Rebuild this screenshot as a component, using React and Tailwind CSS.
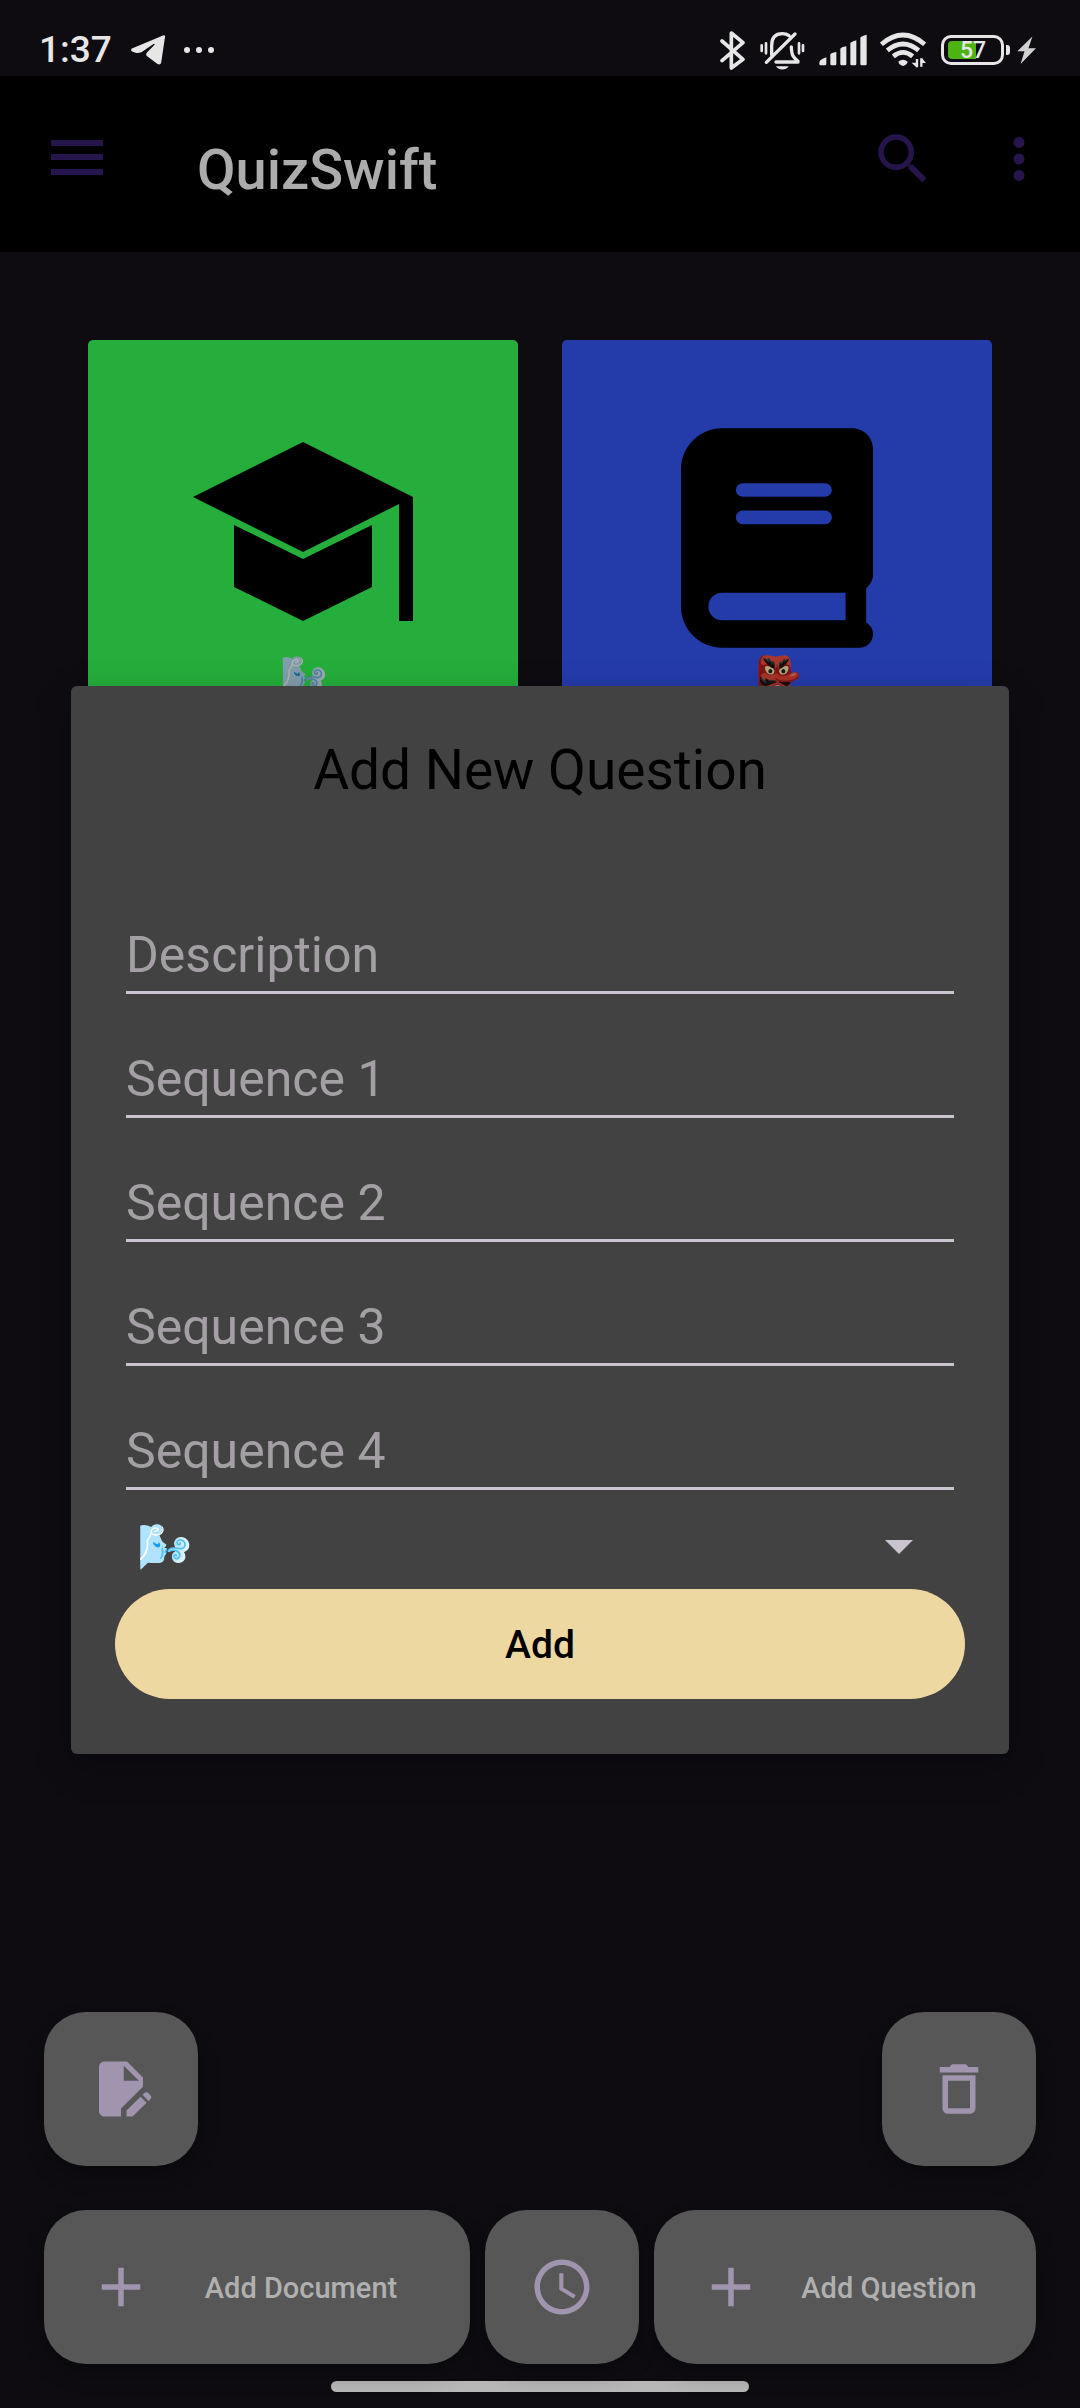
import { MdSearch, MdMoreVert, MdDeleteOutline, MdAccessTime, MdAdd } from "react-icons/md";

function StatusBar() {
  return (
    <div className="flex h-[76px] items-center justify-between pl-[39px] pr-11 pt-6 text-[#e6e6e6]">
      <div className="flex items-center">
        <span className="text-[37px] leading-[44px] font-medium">1:37</span>
        <svg className="ml-[19px] h-[30px] w-[34px]" viewBox="0 0 34 30" fill="currentColor" aria-hidden="true">
          <path d="M32 .5 1.5 13.2c-2 .9-1.8 2.9.3 3.5 4 1.600 6.700 1.700 9.700-.2L22.500 9c1-.5 1.600.2.8 1L16 17.500c-1.400 1.500-1 3 .5 4l10 7.500c1.500 1 3.300.5 3.700-1.500L34 2c.1-1.400-.8-2-2-1.500z" />
        </svg>
        <span className="ml-[19px] flex gap-[6px]">
          <i className="size-[6px] rounded-full bg-current" />
          <i className="size-[6px] rounded-full bg-current" />
          <i className="size-[6px] rounded-full bg-current" />
        </span>
      </div>
      <div className="flex items-center">
        <svg className="h-[39px] w-[25px]" viewBox="62 58 75 117" fill="none" stroke="currentColor" strokeWidth="11" strokeLinecap="round" strokeLinejoin="round" aria-hidden="true">
          <path d="M68 88 131 143 96 169V64l35 29-63 54" />
        </svg>
        <svg className="ml-[15px] h-[39px] w-[45px]" viewBox="182 60 135 117" fill="none" stroke="currentColor" strokeWidth="10" strokeLinecap="round" aria-hidden="true">
          <path d="M201 154 287 69M217 133V104c0-24 12-36 32-36 10 0 15 2 20 6M230 153h66M276 108c1 24 4 30 20 43" />
          <path d="M187 103v17M200 97v30M299 97v30M311 103v17" strokeWidth="8" />
          <path d="M230 166h38c-8 13-30 13-38 0z" fill="currentColor" stroke="none" />
        </svg>
        <svg className="ml-[14px] h-[32px] w-[48px]" viewBox="357 70 144 96" fill="currentColor" aria-hidden="true">
          <path d="M358 156q0-9 21-16v20q0 4-4 4h-13q-4 0-4-4zM391 131q2-4 18-7v36q0 4-4 4h-10q-4 0-4-4zM421 114q2-4 18-7v53q0 4-4 4h-10q-4 0-4-4zM451 98q2-5 18-9v71q0 4-4 4h-10q-4 0-4-4zM481 81q2-5 19-9v88q0 4-4 4h-11q-4 0-4-4z" />
        </svg>
        <svg className="ml-[13px] h-[36px] w-[46px]" viewBox="539 66 138 108" fill="none" stroke="currentColor" strokeWidth="14" aria-hidden="true">
          <path d="M543 103q65-56 130 0M561 121q47-38 94 0M579 139q29-24 58 0" />
          <path d="M594 155q14-11 28 0-1 8-14 13-13-5-14-13z" fill="currentColor" stroke="none" />
          <path d="M650 147v25M663 170v-25" strokeWidth="7" />
          <path d="M634 158l14 14v-14zM665 145l12 14h-12z" fill="currentColor" stroke="none" />
        </svg>
        <div className="ml-[15px] flex items-center">
          <div className="relative flex h-[30px] w-[63px] items-center rounded-[10px] border-[3px] border-current pl-1">
            <span className="h-[18px] w-[28px] rounded-l-[4px] bg-[#4db313]" />
            <span className="absolute inset-0 pl-4 text-[23px] leading-[25px] font-medium">57</span>
          </div>
          <i className="ml-[2px] h-[10px] w-[4px] rounded-r-[3px] bg-current" />
        </div>
        <svg className="ml-[7px] h-[29px] w-[19px]" viewBox="950 75 58 87" fill="#d0d0d0" aria-hidden="true">
          <path d="M997 76 951 121h22l-12 39 47-48h-23z" />
        </svg>
      </div>
    </div>
  );
}

function TopBar() {
  return (
    <header className="flex h-[176px] items-start bg-black pr-7 text-[#25154b]">
      <button type="button" aria-label="Open menu" className="mt-16 ml-[51px]">
        <svg className="h-[35px] w-[52px]" viewBox="0 0 52 35" fill="currentColor" aria-hidden="true">
          <path d="M0 0h52v6H0zM0 14h52v6H0zM0 29h52v6H0z" />
        </svg>
      </button>
      <h1 className="mt-[62px] ml-[94px] grow text-[56px] leading-[64px] font-medium text-[#acacac]">QuizSwift</h1>
      <button type="button" aria-label="Search" className="mt-[50px]">
        <MdSearch className="size-[66px]" />
      </button>
      <button type="button" aria-label="More options" className="mt-[50px] ml-[50px]">
        <MdMoreVert className="size-[66px]" />
      </button>
    </header>
  );
}

function Categories() {
  return (
    <main className="grid grid-cols-2 gap-11 px-[88px] pt-[88px]">
      <article className="flex h-[430px] flex-col items-center rounded-[5px] bg-[#25ae3b] pt-[88px]">
        <svg className="size-[220px]" viewBox="0 0 220 220" aria-hidden="true">
          <path d="M0 69 110 14l110 55v124h-14V76l-96 48zM41 97l69 34 69-34v62l-69 34-69-34z" />
        </svg>
        <span className="text-[38px] leading-[56px] brightness-70 saturate-75">🌬️</span>
      </article>
      <article className="flex h-[430px] flex-col items-center rounded-[5px] bg-[#243baa] pt-[88px]">
        <svg className="h-[220px] w-[192px]" viewBox="0 0 448 512" fillRule="evenodd" aria-hidden="true">
          <path d="M96 0C43 0 0 43 0 96v320c0 53 43 96 96 96h320c18 0 32-14 32-32 0-12-6-21-16-27v-80c10-8 16-19 16-31V48c0-26-22-48-48-48H96zm0 384h288v64H96c-18 0-32-14-32-32s14-32 32-32zm48-256h192a16 16 0 0 1 0 32H144a16 16 0 0 1 0-32zm0 64h192a16 16 0 0 1 0 32H144a16 16 0 0 1 0-32z" />
        </svg>
        <span className="text-[38px] leading-[56px] brightness-70">👺</span>
      </article>
    </main>
  );
}

const fields = ["Description", "Sequence 1", "Sequence 2", "Sequence 3", "Sequence 4"];

function QuestionDialog() {
  return (
    <div className="absolute inset-x-[71px] top-[76px] bottom-[44px] flex items-center">
      <form
        role="dialog"
        aria-labelledby="dialog-title"
        onSubmit={(e) => e.preventDefault()}
        className="flex w-full flex-col rounded-[6px] bg-[#424242] px-11 pt-[52px] pb-[55px] shadow-[0_12px_36px_rgba(0,0,0,0.3)]"
      >
        <h2 id="dialog-title" className="mb-[68px] text-center text-[55px] leading-[64px] text-black">
          Add New Question
        </h2>
        {fields.map((name) => (
          <input
            key={name}
            type="text"
            aria-label={name}
            placeholder={name}
            className="mx-[11px] h-[124px] border-b-[3px] border-[#cac4d0] bg-transparent pt-[55px] pb-[7px] text-[50px] leading-[59px] text-white outline-none placeholder:text-[#a49fa5] placeholder:opacity-100"
          />
        ))}
        <div className="relative mt-[15px]">
          <select aria-label="Category" className="h-[84px] w-full appearance-none bg-transparent pl-[22px] text-[44px] text-white outline-none">
            <option>🌬️</option>
            <option>👺</option>
          </select>
          <svg className="pointer-events-none absolute top-[35px] right-[52px] h-[14px] w-[28px]" viewBox="0 0 28 14" fill="#cac4d0" aria-hidden="true">
            <path d="M0 0h28L14 14z" />
          </svg>
        </div>
        <button type="submit" className="h-[110px] rounded-full bg-[#eed8a1] pt-[2px] text-[39px] font-medium text-black">
          Add
        </button>
      </form>
    </div>
  );
}

function EditDocumentIcon() {
  return (
    <svg className="size-[66px]" viewBox="0 0 24 24" fill="currentColor" fillRule="evenodd" aria-hidden="true">
      <path d="M6 2h8.200L20 7.800v3.400l-8 7.900V22H6c-1.100 0-2-.9-2-2V4c0-1.100.9-2 2-2zm7 1.500V9h5.500zM14 22v-2.200l5.100-5 2.200 2.200-5.100 5zM19.800 14.100l.9-.7c.4-.3.800-.3 1.100 0l.9.9c.4.4.4.800.1 1.200l-.8.900z" />
    </svg>
  );
}

const fab =
  "flex h-[154px] items-center rounded-[42px] bg-[#575757] text-[#a094ae] shadow-[0_10px_20px_rgba(0,0,0,0.3)]";
const fabLabel = "grow pt-[2px] pr-[22px] text-center text-[29px] leading-[33px] font-medium text-[#b0b0b0]";

function Actions() {
  return (
    <footer className="mt-auto px-11">
      <div className="flex justify-between">
        <button type="button" aria-label="Edit document" className={fab + " w-[154px] justify-center"}>
          <EditDocumentIcon />
        </button>
        <button type="button" aria-label="Delete" className={fab + " w-[154px] justify-center"}>
          <MdDeleteOutline className="size-[66px]" />
        </button>
      </div>
      <div className="mt-11 flex gap-[15px]">
        <button type="button" className={fab + " grow pl-11"}>
          <MdAdd className="size-[66px]" />
          <span className={fabLabel}>Add Document</span>
        </button>
        <button type="button" aria-label="History" className={fab + " w-[154px] justify-center"}>
          <MdAccessTime className="size-[66px]" />
        </button>
        <button type="button" className={fab + " w-[382px] pl-11"}>
          <MdAdd className="size-[66px]" />
          <span className={fabLabel}>Add Question</span>
        </button>
      </div>
      <div className="mx-auto mt-[17px] mb-4 h-[11px] w-[418px] rounded-full bg-[#b7b7b7]" />
    </footer>
  );
}

export default function App() {
  return (
    <div className="relative flex min-h-screen flex-col bg-[#0e0c11] font-[Roboto,sans-serif]">
      <StatusBar />
      <TopBar />
      <Categories />
      <Actions />
      <QuestionDialog />
    </div>
  );
}
